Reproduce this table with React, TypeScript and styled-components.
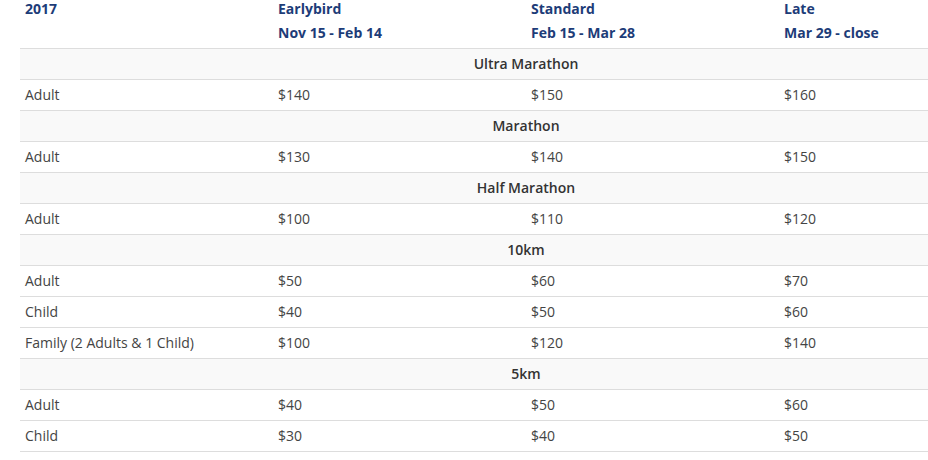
import styled, { createGlobalStyle } from "styled-components";

const GlobalStyle = createGlobalStyle`
  html, body {
    margin: 0;
    padding: 0;
    overflow: hidden;
    background: #fff;
  }
  body {
    font-family: "Open Sans", "Liberation Sans", sans-serif;
    font-size: 14px;
    color: #444;
  }
`;

const Page = styled.div`
  padding: 0 20px;
  width: 1012px;
`;

const Table = styled.table`
  width: 1012px;
  margin-top: -3px;
  border-collapse: collapse;
  table-layout: fixed;
`;

const HeadCell = styled.th`
  box-sizing: border-box;
  width: 253px;
  padding: 0 5px 3px;
  text-align: left;
  vertical-align: top;
  font-weight: 700;
  line-height: 24px;
  color: #1d3c78;
`;

const Row = styled.tr<{ $shaded?: boolean }>`
  border-top: 1px solid #ddd;
  background: ${(p) => (p.$shaded ? "#f9f9f9" : "#fff")};
`;

const Cell = styled.td`
  padding: 5px;
  line-height: 20px;
`;

const SectionCell = styled.td`
  padding: 5px;
  line-height: 20px;
  text-align: center;
  font-weight: 600;
  color: #333;
`;

const sections = [
  { name: "Ultra Marathon", rows: [["Adult", "$140", "$150", "$160"]] },
  { name: "Marathon", rows: [["Adult", "$130", "$140", "$150"]] },
  { name: "Half Marathon", rows: [["Adult", "$100", "$110", "$120"]] },
  {
    name: "10km",
    rows: [
      ["Adult", "$50", "$60", "$70"],
      ["Child", "$40", "$50", "$60"],
      ["Family (2 Adults & 1 Child)", "$100", "$120", "$140"],
    ],
  },
  {
    name: "5km",
    rows: [
      ["Adult", "$40", "$50", "$60"],
      ["Child", "$30", "$40", "$50"],
    ],
  },
];

const App = () => {
  return (
    <Page>
      <GlobalStyle />
      <Table>
        <thead>
          <tr>
            <HeadCell>2017</HeadCell>
            <HeadCell>
              Earlybird
              <br />
              Nov 15 - Feb 14
            </HeadCell>
            <HeadCell>
              Standard
              <br />
              Feb 15 - Mar 28
            </HeadCell>
            <HeadCell>
              Late
              <br />
              Mar 29 - close
            </HeadCell>
          </tr>
        </thead>
        <tbody>
          {sections.map((s) => (
            <>
              <Row $shaded key={s.name}>
                <SectionCell colSpan={4}>{s.name}</SectionCell>
              </Row>
              {s.rows.map((r, i) => (
                <Row key={s.name + i}>
                  {r.map((c, j) => (
                    <Cell key={j}>{c}</Cell>
                  ))}
                </Row>
              ))}
            </>
          ))}
          <Row>
            <Cell colSpan={4} />
          </Row>
        </tbody>
      </Table>
    </Page>
  );
};

export default App;
